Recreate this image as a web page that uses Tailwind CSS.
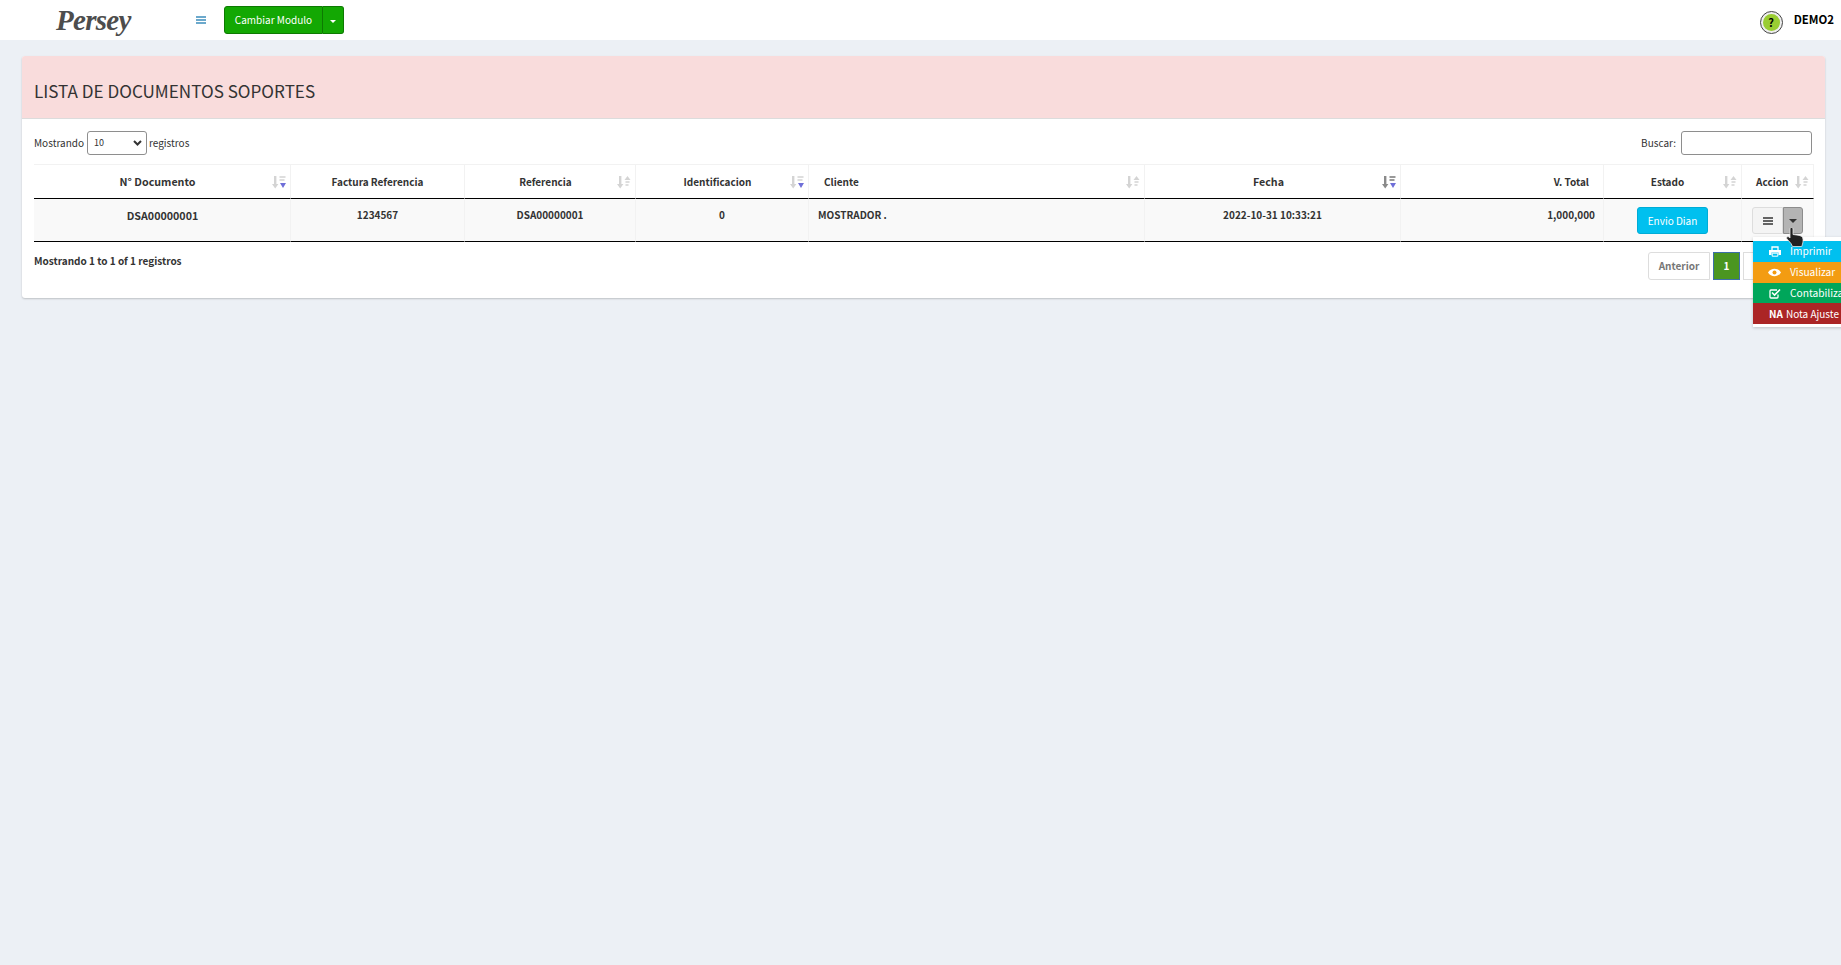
<!DOCTYPE html>
<html lang="en">
<head>
  <meta charset="UTF-8" />
  <script src="https://cdn.jsdelivr.net/npm/@tailwindcss/browser@4"></script>
  <title>Lista de documentos soportes</title>
</head>
<body class="bg-[#ecf0f5] h-[965px] overflow-hidden relative font-['Noto_Sans_CJK_SC',sans-serif] text-[#333] text-[10px] leading-[15px]">

  <!-- navbar -->
  <header class="h-[40px] bg-white flex items-center">
    <div class="w-[196px] pl-[56px] shrink-0 font-['Liberation_Serif',serif] italic font-bold text-[29px] tracking-[-0.7px] text-[#4d4d4d] leading-[40px]">Persey</div>
    <svg class="w-[10px] h-[8px] shrink-0" viewBox="0 0 10 8"><path d="M0 1h10M0 4h10M0 7h10" stroke="#3c8dbc" stroke-width="1.6"/></svg>
    <div class="ml-[18px] flex h-[28px] text-white">
      <div class="w-[99px] bg-[#13a803] border border-[#0d7a02] rounded-l-[3px] flex items-center justify-center pb-[2px]">Cambiar Modulo</div>
      <div class="w-[21px] bg-[#13a803] border border-l-0 border-[#0d7a02] rounded-r-[3px] flex items-center justify-center">
        <span class="w-0 h-0 border-x-[3px] border-x-transparent border-t-[3px] border-t-white mt-[2px]"></span>
      </div>
    </div>
    <div class="ml-auto flex items-center pr-[7px]">
      <div class="w-[23px] h-[23px] rounded-full border border-[#444] bg-[#eee] flex items-center justify-center mt-[4px]">
        <div class="w-[17px] h-[17px] rounded-full bg-[#9acd32] text-black font-bold text-[11px] leading-[17px] text-center">?</div>
      </div>
      <span class="ml-[11px] mb-[2px] font-bold text-[11.4px] text-black">DEMO2</span>
    </div>
  </header>

  <!-- card -->
  <main class="ml-[22px] mr-[16px] mt-[16px] bg-white rounded-[3px] shadow-[0_1px_2px_rgba(0,0,0,0.2)] h-[242px]">
    <div class="h-[63px] bg-[#f9dcdc] border-b border-[#dcdcdc] rounded-t-[3px] pl-[12px] pt-[23px]">
      <h1 class="text-[17.1px] leading-[24px] text-[#333]">LISTA DE DOCUMENTOS SOPORTES</h1>
    </div>
    <div class="px-[12px]">
      <div class="h-[45px] flex items-start justify-between pt-[12px]">
        <div class="flex items-center h-[24px]">
          <span class="mb-[2px]">Mostrando</span>
          <div class="relative ml-[3px] mr-[2px] w-[60px] h-[24px] border border-[#8e8e8e] rounded-[3px] bg-white text-[9px] leading-[22px] pl-[6px]">
            10
            <svg class="absolute right-[4px] top-[8px] w-[9px] h-[6px]" viewBox="0 0 9 6"><path d="M1 1l3.500 3.500L8 1" stroke="#333" stroke-width="2" fill="none"/></svg>
          </div>
          <span class="mb-[2px]">registros</span>
        </div>
        <div class="flex items-center h-[24px] mr-[1px]">
          <span class="mb-[2px]">Buscar:</span>
          <input class="ml-[5px] w-[131px] h-[24px] border border-[#8e8e8e] rounded-[3px]" />
        </div>
      </div>

      <table class="table-fixed border-separate border-spacing-0 w-[1780px] font-bold">
        <colgroup>
          <col class="w-[257px]"/><col class="w-[174px]"/><col class="w-[171px]"/><col class="w-[173px]"/><col class="w-[336px]"/><col class="w-[256px]"/><col class="w-[203px]"/><col class="w-[138px]"/><col class="w-[72px]"/>
        </colgroup>
        <thead>
          <tr class="h-[35px] [&>th]:border-t [&>th]:border-r [&>th]:border-b [&>th]:border-[#f2f2f2] [&>th]:border-b-black [&>th]:pb-[1px]">
            <th class="relative text-center pr-[9px] text-[10.7px]">N° Documento
              <svg class="absolute right-[4px] top-[11px] w-[14px] h-[13px]" viewBox="0 0 14 13"><path d="M2 0h2.400v8h2L3.200 12.500 0 8h2z" fill="#d4d4d4"/><path d="M7.500 1h6M7.500 4h5" stroke="#dedede" stroke-width="2"/><path d="M8 7h6l-3 5z" fill="#6f6fd8"/></svg>
            </th>
            <th class="text-center">Factura Referencia</th>
            <th class="relative text-center pr-[9px]">Referencia
              <svg class="absolute right-[4px] top-[11px] w-[14px] h-[13px]" viewBox="0 0 14 13"><path d="M2 0h2.400v8h2L3.200 12.500 0 8h2z" fill="#d4d4d4"/><path d="M8.500 6h4M8.500 9h3" stroke="#dedede" stroke-width="2"/><path d="M7.500 4h6l-3-4z" fill="#d4d4d4"/></svg>
            </th>
            <th class="relative text-center pr-[9px]">Identificacion
              <svg class="absolute right-[4px] top-[11px] w-[14px] h-[13px]" viewBox="0 0 14 13"><path d="M2 0h2.400v8h2L3.200 12.500 0 8h2z" fill="#d4d4d4"/><path d="M7.500 1h6M7.500 4h5" stroke="#dedede" stroke-width="2"/><path d="M8 7h6l-3 5z" fill="#6f6fd8"/></svg>
            </th>
            <th class="relative text-left pl-[15px]">Cliente
              <svg class="absolute right-[4px] top-[11px] w-[14px] h-[13px]" viewBox="0 0 14 13"><path d="M2 0h2.400v8h2L3.200 12.500 0 8h2z" fill="#d4d4d4"/><path d="M8.500 6h4M8.500 9h3" stroke="#dedede" stroke-width="2"/><path d="M7.500 4h6l-3-4z" fill="#d4d4d4"/></svg>
            </th>
            <th class="relative text-center pr-[8px] text-[10.7px]">Fecha
              <svg class="absolute right-[4px] top-[11px] w-[14px] h-[13px]" viewBox="0 0 14 13"><path d="M2 0h2.400v8h2L3.200 12.500 0 8h2z" fill="#8a8a8a"/><path d="M7.500 1h6M7.500 4h5" stroke="#999" stroke-width="2"/><path d="M8 7h6l-3 5z" fill="#6f6fd8"/></svg>
            </th>
            <th class="text-right pr-[14px]">V. Total</th>
            <th class="relative text-center pr-[10px]">Estado
              <svg class="absolute right-[4px] top-[11px] w-[14px] h-[13px]" viewBox="0 0 14 13"><path d="M2 0h2.400v8h2L3.200 12.500 0 8h2z" fill="#d4d4d4"/><path d="M8.500 6h4M8.500 9h3" stroke="#dedede" stroke-width="2"/><path d="M7.500 4h6l-3-4z" fill="#d4d4d4"/></svg>
            </th>
            <th class="relative text-left pl-[14px]">Accion
              <svg class="absolute right-[4px] top-[11px] w-[14px] h-[13px]" viewBox="0 0 14 13"><path d="M2 0h2.400v8h2L3.200 12.500 0 8h2z" fill="#d4d4d4"/><path d="M8.500 6h4M8.500 9h3" stroke="#dedede" stroke-width="2"/><path d="M7.500 4h6l-3-4z" fill="#d4d4d4"/></svg>
            </th>
          </tr>
        </thead>
        <tbody>
          <tr class="h-[43px] bg-[#f9f9f9] align-top [&>td]:border-r [&>td]:border-b [&>td]:border-[#f2f2f2] [&>td]:border-b-black">
            <td class="text-center pt-[9px] pl-[1px] text-[10.7px]">DSA00000001</td>
            <td class="text-center pt-[8px]">1234567</td>
            <td class="text-center pt-[8px]">DSA00000001</td>
            <td class="text-center pt-[8px]">0</td>
            <td class="pl-[9px] pt-[8px]">MOSTRADOR .</td>
            <td class="text-center pt-[8px]">2022-10-31 10:33:21</td>
            <td class="text-right pr-[8px] pt-[8px]">1,000,000</td>
            <td class="text-center font-normal pt-[8px]">
              <span class="inline-flex w-[71px] h-[27px] bg-[#00c0ef] border border-[#00acd6] rounded-[3px] text-white items-center justify-center">Envio Dian</span>
            </td>
            <td class="pt-[8px] pl-[10px]">
              <div class="flex h-[27px]">
                <div class="w-[31px] bg-[#f4f4f4] border border-[#ddd] rounded-l-[3px] flex items-center justify-center">
                  <svg class="w-[10px] h-[8px]" viewBox="0 0 10 8"><path d="M0 1h10M0 4h10M0 7h10" stroke="#333" stroke-width="1.5"/></svg>
                </div>
                <div class="w-[20px] bg-[#b4b4b4] border border-[#8c8c8c] rounded-r-[3px] flex items-center justify-center">
                  <span class="w-0 h-0 border-x-[4px] border-x-transparent border-t-[4px] border-t-[#333]"></span>
                </div>
              </div>
            </td>
          </tr>
        </tbody>
      </table>

      <div class="flex justify-between mt-[10px]">
        <div class="font-bold mt-[1px]">Mostrando 1 to 1 of 1 registros</div>
        <div class="flex font-bold">
          <div class="w-[62px] h-[28px] border border-[#ddd] rounded-l-[3px] bg-white text-[#777] flex items-center justify-center pb-[2px]">Anterior</div>
          <div class="ml-[3px] w-[27px] h-[28px] border border-[#3c6fa8] bg-[#4b9621] text-white flex items-center justify-center pb-[2px]">1</div>
          <div class="ml-[3px] w-[70px] h-[28px] border border-[#ddd] bg-white"></div>
        </div>
      </div>
    </div>
  </main>

  <!-- open dropdown -->
  <div class="absolute left-[1753px] top-[237px] w-[100px] pt-[4px] pb-[3px] bg-white shadow-[0_1px_3px_rgba(0,0,0,0.2)] text-white whitespace-nowrap text-[10.2px]">
    <div class="h-[21px] bg-[#00c0ef] flex items-center pl-[16px]">
      <svg class="w-[12px] h-[11px] shrink-0" viewBox="0 0 12 11"><path d="M3 4V1h6v3" stroke="#fff" stroke-width="1.300" fill="none"/><path d="M0 4h12v5H9.500V6.500h-7V9H0z" fill="#fff"/><path d="M3.200 7.200h5.600v3H3.200z" stroke="#fff" fill="none"/></svg>
      <span class="ml-[9px] mb-[2px]">Imprimir</span>
    </div>
    <div class="h-[21px] bg-[#f39c12] flex items-center pl-[15px]">
      <svg class="w-[13px] h-[9px] shrink-0" viewBox="0 0 13 9"><path d="M0 4.500C3 -0.500 10 -0.500 13 4.500C10 9.500 3 9.500 0 4.500z" fill="#fff"/><circle cx="6.500" cy="4.500" r="2" fill="#f39c12"/></svg>
      <span class="ml-[9px] mb-[2px]">Visualizar</span>
    </div>
    <div class="h-[20px] bg-[#00a65a] flex items-center pl-[16px]">
      <svg class="w-[12px] h-[11px] shrink-0" viewBox="0 0 12 11"><path d="M9 6.500V9a1 1 0 0 1-1 1H2a1 1 0 0 1-1-1V3a1 1 0 0 1 1-1h6" stroke="#fff" stroke-width="1.300" fill="none"/><path d="M3 4.500L5.500 7L11 1.500" stroke="#fff" stroke-width="1.600" fill="none"/></svg>
      <span class="ml-[9px] mb-[2px]">Contabilizar</span>
    </div>
    <div class="h-[21px] bg-[#ab2525] flex items-center pl-[16px] text-[10px]"><b>NA</b><span class="ml-[3px]">Nota Ajuste</span></div>
  </div>

  <!-- cursor -->
  <svg class="absolute left-[1786px] top-[227px] w-[18px] h-[20px]" viewBox="0 0 18 20"><path d="M4 2c0-2 3-2 3 0v5.500l5 .7c3 .5 5 1.500 5 4V15l-1.200 4.500H6.500L5 16.500 1 12c-1.300-1.800.7-3 2.300-1.800L4 11z" fill="#222" stroke="#e8e8e8" stroke-width="0.800"/></svg>
</body>
</html>
